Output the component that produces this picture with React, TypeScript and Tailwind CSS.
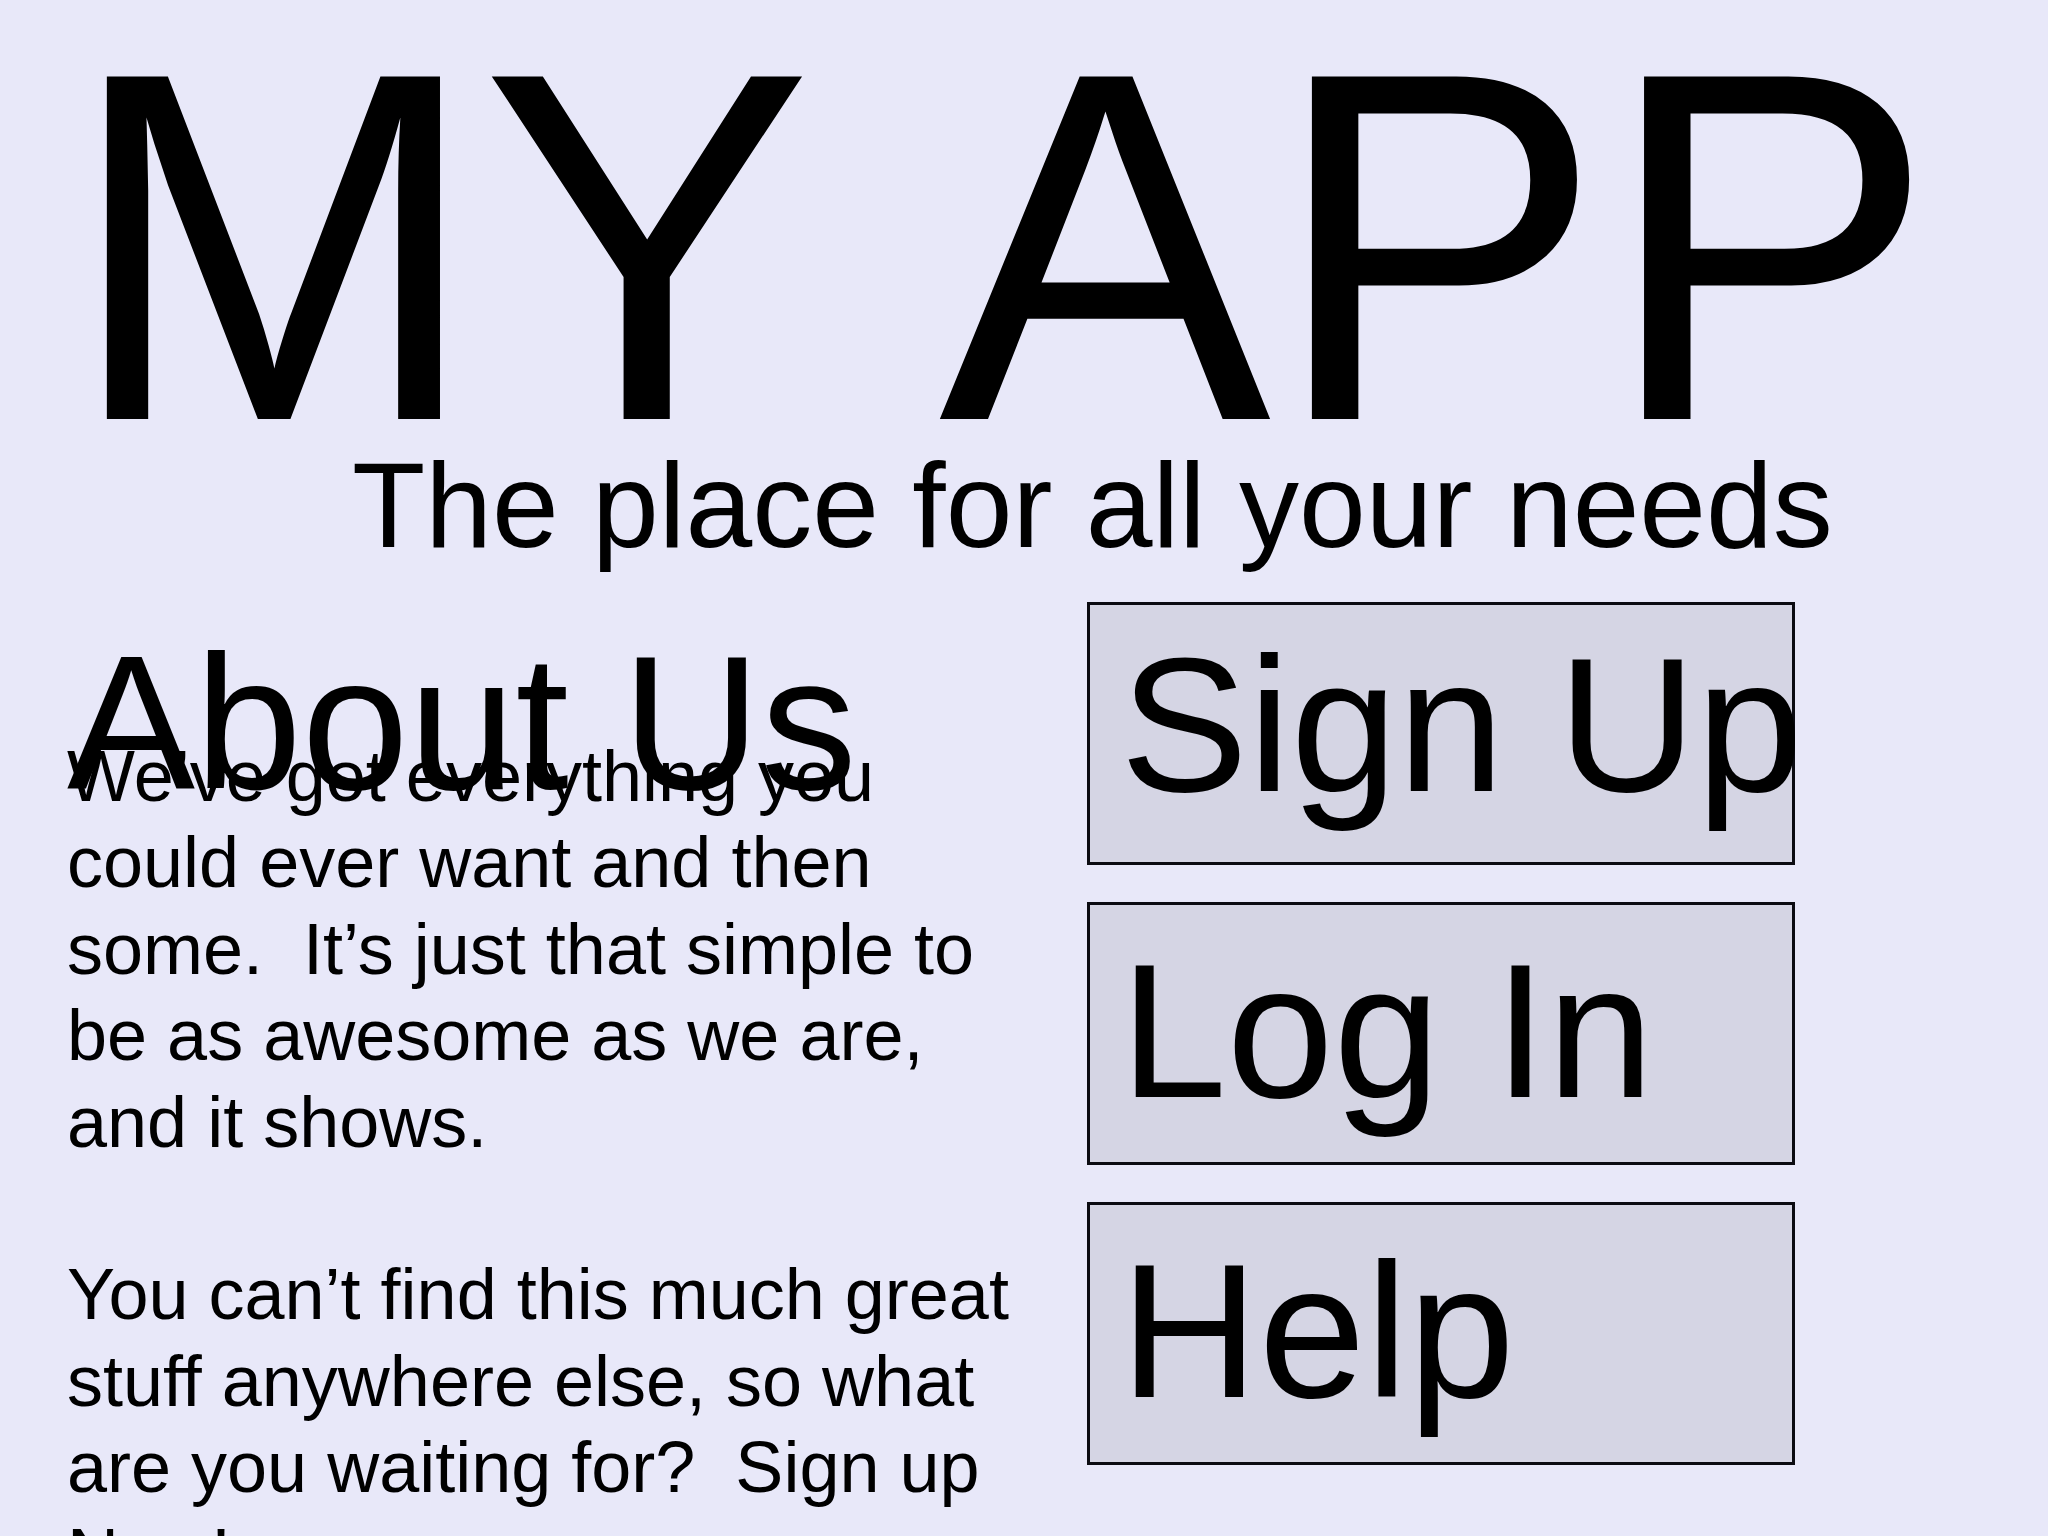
import React from "react";

const body = [
  "We’ve got everything you",
  "could ever want and then",
  "some.  It’s just that simple to",
  "be as awesome as we are,",
  "and it shows.",
  "",
  "You can’t find this much great",
  "stuff anywhere else, so what",
  "are you waiting for?  Sign up",
  "Now!",
].join("\n");

export default function App() {
  return (
    <div className="h-screen w-full overflow-hidden bg-[#e8e8f9] text-black font-['Liberation_Sans',Arial,sans-serif]">
      <h1 className="pl-[66px] pt-[49px] text-[498px] leading-[396px] font-normal whitespace-nowrap [word-spacing:24px]">
        MY APP
      </h1>
      <p className="pl-[352px] text-[120px] leading-none whitespace-nowrap">
        The place for all your needs
      </p>
      <div className="mt-[37px] flex">
        <div className="w-[1087px] shrink-0 pl-[67px]">
          <h2 className="pt-[25px] h-[131px] text-[192px] leading-none font-normal whitespace-nowrap">
            About Us
          </h2>
          <div className="text-[72px] leading-[1.2] whitespace-pre">{body}</div>
        </div>
        <div className="w-[708px] shrink-0 flex flex-col gap-[37px]">
          <div className="h-[263px] border-[3px] border-[#0b0b12] bg-[#d5d5e4] pl-[30px] pt-[24px] text-[192px] leading-none whitespace-nowrap">
            Sign Up
          </div>
          <div className="h-[263px] border-[3px] border-[#0b0b12] bg-[#d5d5e4] pl-[30px] pt-[30px] text-[192px] leading-none whitespace-nowrap">
            Log In
          </div>
          <div className="h-[263px] border-[3px] border-[#0b0b12] bg-[#d5d5e4] pl-[30px] pt-[30px] text-[192px] leading-none whitespace-nowrap">
            Help
          </div>
        </div>
      </div>
    </div>
  );
}
